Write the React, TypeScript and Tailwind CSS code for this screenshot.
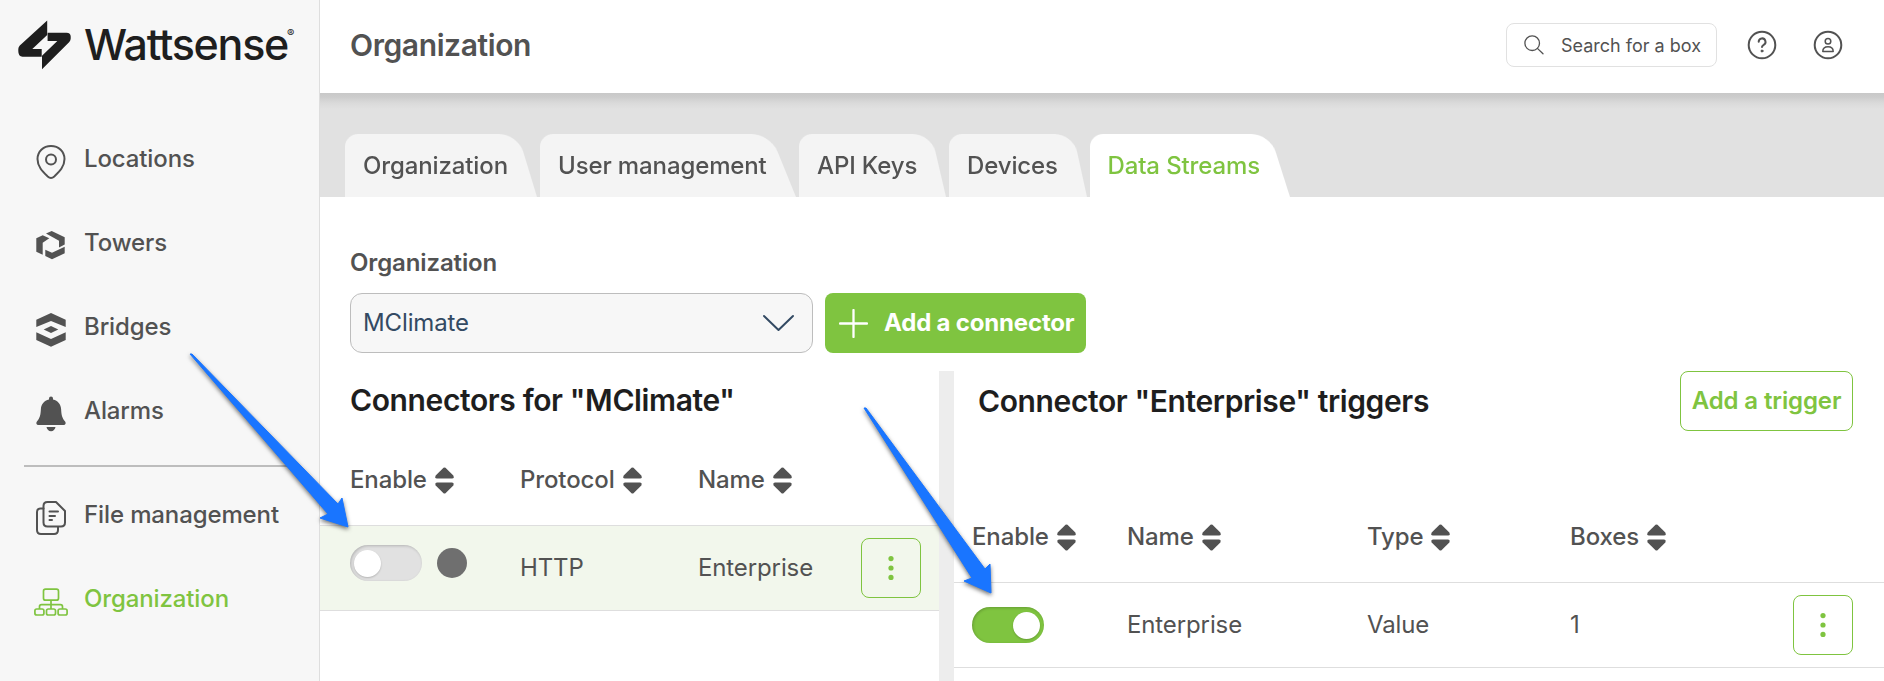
import type { ReactNode } from "react";

const GREEN = "#7fc440";

function Logo() {
  return (
    <div className="flex h-[93px] items-start pt-[20px] pl-[18px]">
      <svg width="53" height="50" viewBox="0 0 53 50" fill="#1e1e1e">
        <path d="M29.200 0.600V15L14.300 29H23.700V36.700H4.500Q0.300 36.700 0.300 31V29Q0.300 27 1.800 25.500Z" />
        <path d="M29.600 12.700H48.500Q52.700 12.700 52.700 16.500V18.600Q52.700 20.600 51.300 22L24 49.200V35.700L39.300 21H29.600Z" />
      </svg>
      <span className="mt-[-6px] ml-[13px] text-[43px] leading-[60px] font-medium tracking-[-1.3px] text-[#1e1e1e]">Wattsense</span>
      <span className="mt-[6px] ml-[-1px] text-[11px] leading-[14px] text-[#1e1e1e]">®</span>
    </div>
  );
}

const PinIcon = () => (
  <svg width="34" height="36" viewBox="0 0 34 36" fill="none" stroke="#525252" strokeWidth="2">
    <path d="M17 2C9.200 2 3.500 7.500 3.500 15c0 8 5.500 13 10.200 17.500q3.300 3 6.600 0C25 28 30.500 23 30.500 15 30.500 7.500 24.800 2 17 2Z" />
    <circle cx="17" cy="15.500" r="5" />
  </svg>
);

const TowerIcon = () => (
  <svg width="34" height="36" viewBox="0 0 34 36" fill="#525252">
    <path d="M12 5.600 17.700 3 30.700 9.300V16.500L25 19.500V12.700Z" />
    <path d="M2.300 10.300 8.700 7.300 15.300 10.300 8.700 14.700V26.700L2.300 23.700Z" />
    <path d="M11.300 21.800 18 24.700 30.700 18.700V25.300L18 31.300 11.300 28Z" />
  </svg>
);

const BridgeIcon = () => (
  <svg width="34" height="36" viewBox="0 0 34 36" fill="#525252">
    <path d="M2.300 7.700 17 1 31.700 7.700V15L17 9 2.300 15Z" />
    <path d="M9.700 17.400 17 14 24.300 17.400 17 20.900Z" />
    <path d="M2.300 20.300 17 27 31.700 20.300V28L17 34.800 2.300 28Z" />
  </svg>
);

const BellIcon = () => (
  <svg width="34" height="38" viewBox="0 0 34 38" fill="#525252">
    <path d="M15 3.500a2 2 0 0 1 4 0v1c5 1.200 7.800 5 8.100 9.500.3 6 1 9 4 12.500 1.200 1.500.5 3.500-1.500 3.500H4.400c-2 0-2.700-2-1.500-3.500 3-3.500 3.700-6.500 4-12.500C7.200 9.500 10 5.700 15 4.500Z" />
    <path d="M12.500 32h9c-.5 2.600-2.200 4.300-4.500 4.300s-4-1.700-4.500-4.300Z" />
  </svg>
);

const FilesIcon = () => (
  <svg width="34" height="36" viewBox="0 0 34 36" fill="none" stroke="#525252" strokeWidth="2" strokeLinecap="round" strokeLinejoin="round">
    <path d="M13.500 2H22l9 9v11.500q0 4-4 4H13.500q-4 0-4-4V6q0-4 4-4Z" />
    <path d="M9.500 8.500H6.500q-3.500 0-3.500 3.500V30q0 4 4 4H20q4 0 4-4V27" />
    <path d="M15.500 11.500H24M15.500 16H21M15.500 20H18" />
  </svg>
);

const OrgIcon = () => (
  <svg width="34" height="36" viewBox="0 0 34 36" fill="none" stroke={GREEN} strokeWidth="1.700">
    <rect x="9.500" y="5.200" width="15" height="11" rx="2" />
    <rect x="0.900" y="25" width="9" height="6" rx="1.800" />
    <rect x="12.500" y="25" width="9" height="6" rx="1.800" />
    <rect x="24.100" y="25" width="9" height="6" rx="1.800" />
    <path d="M17 16V25M5.500 25V22.700Q5.500 20.700 7.500 20.700H26.500Q28.500 20.700 28.500 22.700V25" />
  </svg>
);

function NavItem({ icon, label, active }: { icon: ReactNode; label: string; active?: boolean }) {
  return (
    <a className={`flex h-[84px] items-center pl-[34px] text-[24px] font-medium ${active ? "text-[#7fc440]" : "text-[#525252]"}`}>
      <span className="mt-[6px] w-[50px] shrink-0">{icon}</span>
      <span className="whitespace-nowrap">{label}</span>
    </a>
  );
}

function Tab({ label, width, active }: { label: string; width: string; active?: boolean }) {
  return (
    <div className={`relative isolate flex h-[63px] items-center pl-[18px] text-[24px] font-medium ${width} ${active ? "text-[#7fc440]" : "text-[#525252]"}`}>
      <span className={`absolute bottom-0 left-0 -z-10 h-[70px] w-full origin-bottom-left rounded-tl-[15px] rounded-tr-[21px] [transform:perspective(11px)_rotateX(1deg)] ${active ? "bg-white" : "bg-[#f4f4f4]"}`} />
      <span className="whitespace-nowrap">{label}</span>
    </div>
  );
}

const SortIcon = () => (
  <svg width="19" height="27" viewBox="0 0 19 27" fill="#525252">
    <path d="M8.500 .8Q9.500 0 10.500 .8L18.300 8.600Q19.500 11.500 17 11.600H2Q-.5 11.500 .7 8.600Z" />
    <path d="M8.500 26.200Q9.500 27 10.500 26.200L18.300 18.400Q19.500 15.500 17 15.400H2Q-.5 15.500 .7 18.400Z" />
  </svg>
);

function Th({ label, width }: { label: string; width: string }) {
  return (
    <div className={`flex items-center gap-[8px] text-[24px] font-medium text-[#525252] ${width}`}>
      {label}
      <SortIcon />
    </div>
  );
}

function Switch({ on }: { on?: boolean }) {
  return (
    <span className={`flex h-9 w-[72px] items-center rounded-full px-1 shadow-[inset_1px_1px_3px_rgba(0,0,0,0.2)] ${on ? "justify-end bg-[#7fc440]" : "bg-[#e1e1e1]"}`}>
      <span className="size-[27px] rounded-full bg-white shadow-[0_1px_2px_rgba(0,0,0,0.2)]" />
    </span>
  );
}

function MoreButton() {
  return (
    <button className="flex size-[60px] shrink-0 items-center justify-center rounded-[8px] border border-[#7fc440]">
      <svg width="8" height="26" viewBox="0 0 8 26" fill={GREEN}>
        <circle cx="4" cy="3.600" r="2.600" />
        <circle cx="4" cy="13" r="2.600" />
        <circle cx="4" cy="22.400" r="2.600" />
      </svg>
    </button>
  );
}

function Arrow({ className, points, width, height }: { className: string; points: string; width: number; height: number }) {
  return (
    <svg className={`pointer-events-none absolute overflow-visible ${className}`} width={width} height={height} fill="#1975ff">
      <polygon points={points} strokeLinejoin="round" stroke="#1975ff" strokeWidth="1" className="drop-shadow-[0_2px_2px_rgba(0,0,0,0.55)]" />
    </svg>
  );
}

export default function App() {
  return (
    <div className="relative flex h-[681px] w-[1884px] overflow-hidden bg-white font-['Inter',sans-serif] tracking-[-0.12px] text-[#525252]">
      <aside className="w-[320px] shrink-0 border-r border-[#dedede] bg-[#f7f7f7]">
        <Logo />
        <nav className="mt-[24px]">
          <NavItem icon={<PinIcon />} label="Locations" />
          <NavItem icon={<TowerIcon />} label="Towers" />
          <NavItem icon={<BridgeIcon />} label="Bridges" />
          <NavItem icon={<BellIcon />} label="Alarms" />
          <div className="mt-[12px] mr-[24px] mb-[6px] ml-[24px] h-[2px] bg-[#bdbdbd]" />
          <NavItem icon={<FilesIcon />} label="File management" />
          <NavItem icon={<OrgIcon />} label="Organization" active />
        </nav>
      </aside>

      <div className="flex min-w-0 flex-1 flex-col">
        <header className="flex h-[93px] shrink-0 items-center bg-white pr-[41px] pb-[3px] pl-[30px]">
          <h1 className="text-[30px] font-semibold tracking-[-0.4px]">Organization</h1>
          <div className="ml-auto flex h-[44px] w-[211px] items-center rounded-[8px] border border-[#e1e1e1] pl-[17px]">
            <svg width="20" height="20" viewBox="0 0 20 20" fill="none" stroke="#525252" strokeWidth="1.300" strokeLinecap="round">
              <circle cx="8.200" cy="8.200" r="7.300" />
              <path d="M13.400 13.400 19 18.800" />
            </svg>
            <span className="ml-[17px] text-[18px] tracking-normal whitespace-nowrap">Search for a box</span>
          </div>
          <svg className="ml-[30px]" width="30" height="30" viewBox="0 0 30 30" fill="none" stroke="#525252" strokeWidth="2" strokeLinecap="round">
            <circle cx="15" cy="15" r="13.300" />
            <path d="M11.700 11.800a3.400 3.400 0 1 1 5 3q-1.700 1-1.700 2.200" />
            <circle cx="15" cy="21" r="1" fill="#525252" strokeWidth="1" />
          </svg>
          <svg className="ml-[36px]" width="30" height="30" viewBox="0 0 30 30" fill="none" stroke="#525252" strokeWidth="2">
            <circle cx="15" cy="15" r="13.300" />
            <circle cx="15" cy="11.300" r="2.800" strokeWidth="1.500" />
            <path d="M9.800 21.500C9.800 18 12 16.700 15 16.700S20.200 18 20.200 21.500Z" strokeWidth="1.500" strokeLinejoin="round" />
          </svg>
        </header>

        <div className="flex h-[104px] shrink-0 items-end gap-[3px] bg-[#e1e1e1] bg-[linear-gradient(#c8c8c8,#cccccc_4px,#dadada_10px,#e1e1e1_16px)] pl-[25px]">
          <Tab label="Organization" width="w-[192px]" />
          <Tab label="User management" width="w-[256px]" />
          <Tab label="API Keys" width="w-[147px]" />
          <Tab label="Devices" width="w-[137.500px]" />
          <Tab label="Data Streams" width="w-[200px]" active />
        </div>

        <div className="pt-[51px] pl-[30px]">
          <div className="text-[24px] leading-[30px] font-semibold">Organization</div>
          <div className="mt-[15px] flex gap-[12px]">
            <div className="flex h-[60px] w-[463px] items-center justify-between rounded-[12px] border border-[#bdbdbd] bg-[#f7f7f7] pr-[17px] pl-[12px] text-[24px] text-[#334a63]">
              MClimate
              <svg width="33" height="18" viewBox="0 0 33 18" fill="none" stroke="#334a63" strokeWidth="2" strokeLinecap="round" strokeLinejoin="round">
                <path d="M2 2 16.500 16 31 2" />
              </svg>
            </div>
            <button className="flex h-[60px] w-[261px] items-center rounded-[8px] bg-[#7fc440] pl-[14px] text-[24px] font-bold tracking-[-0.18px] text-white">
              <svg width="29" height="29" viewBox="0 0 29 29" stroke="white" strokeWidth="2.300" strokeLinecap="round">
                <path d="M14.500 1V28M1 14.500H28" />
              </svg>
              <span className="ml-[16px] whitespace-nowrap">Add a connector</span>
            </button>
          </div>
        </div>

        <div className="mt-[18px] flex min-h-0 flex-1">
          <section className="w-[619px] shrink-0">
            <h2 className="mt-[10px] pl-[30px] text-[30px] leading-[38px] font-semibold tracking-[-0.38px] text-[#1e1e1e]">Connectors for "MClimate"</h2>
            <div className="mt-[42px] flex h-[38px] items-center pl-[30px]">
              <Th label="Enable" width="w-[170px]" />
              <Th label="Protocol" width="w-[178px]" />
              <Th label="Name" width="w-[163px]" />
            </div>
            <div className="mt-[26px] flex h-[86px] items-center border-y border-[#dedede] bg-[#f2f7ec] pl-[30px] text-[24px]">
              <div className="mb-[10px] flex w-[170px] items-center gap-[15px]">
                <Switch />
                <span className="size-[30px] rounded-full bg-[#6f6f6f]" />
              </div>
              <div className="w-[178px]">HTTP</div>
              <div className="w-[163px]">Enterprise</div>
              <MoreButton />
            </div>
          </section>

          <div className="w-[15px] shrink-0 bg-[#ededed]" />

          <section className="flex-1">
            <div className="flex items-center justify-between pr-[31px] pl-[24px]">
              <h2 className="text-[30px] leading-[38px] font-semibold tracking-[-0.38px] text-[#1e1e1e]">Connector "Enterprise" triggers</h2>
              <button className="h-[60px] w-[173px] rounded-[8px] border border-[#7fc440] text-[24px] font-semibold whitespace-nowrap text-[#7fc440]">Add a trigger</button>
            </div>
            <div className="mt-[87px] flex h-[38px] items-center pl-[18px]">
              <Th label="Enable" width="w-[155px]" />
              <Th label="Name" width="w-[240px]" />
              <Th label="Type" width="w-[203px]" />
              <Th label="Boxes" width="w-[223px]" />
            </div>
            <div className="mt-[26px] flex h-[86px] items-center border-y border-[#dedede] pl-[18px] text-[24px]">
              <div className="w-[155px]"><Switch on /></div>
              <div className="w-[240px]">Enterprise</div>
              <div className="w-[203px]">Value</div>
              <div className="w-[223px]">1</div>
              <MoreButton />
            </div>
          </section>
        </div>
      </div>

      <Arrow className="top-[353px] left-[189px]" width={160} height={176} points="1,1 3,1 149,151 153,145 159,174 131,165 139,161" />
      <Arrow className="top-[407px] left-[863px]" width={130} height={188} points="1,1 3,1 122,162 127,157 128,186 101,174 109,171" />
    </div>
  );
}
